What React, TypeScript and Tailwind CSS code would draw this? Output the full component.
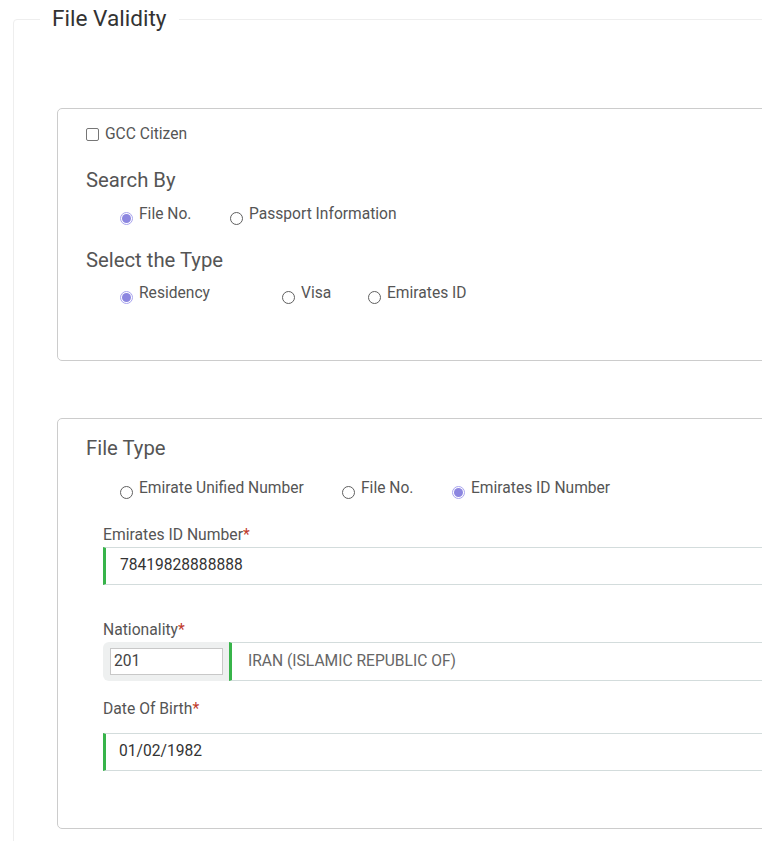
import React from "react";

function Radio({ label, checked, width }: { label: string; checked?: boolean; width: string }) {
  return (
    <div className={`flex items-center ${width}`}>
      <span
        className={`relative top-[4px] mr-[6px] flex h-[13px] w-[13px] shrink-0 items-center justify-center rounded-full border ${
          checked ? "border-[#a9a4ee] bg-white" : "border-[#5f5f5f] bg-white"
        }`}
      >
        {checked && <span className="h-[9px] w-[9px] rounded-full bg-[#8c86e0]" />}
      </span>
      <span className="whitespace-nowrap text-[15.6px] leading-[20px] text-[#555]">{label}</span>
    </div>
  );
}

function Label({ text }: { text: string }) {
  return (
    <div className="text-[15.7px] leading-[20px] text-[#555]">
      {text}
      <span className="text-[#c0392b]">*</span>
    </div>
  );
}

export default function App() {
  return (
    <div
      className="h-[841px] w-[762px] overflow-hidden bg-white"
      style={{ fontFamily: "Roboto, 'Liberation Sans', sans-serif" }}
    >
      <div className="w-[1000px] pl-[13px]">
        <fieldset className="rounded-tl-[4px] border border-[#eeeeee] pb-[40px]">
          <legend className="ml-[26px] px-[12px] text-[22.6px] leading-[38px] text-[#333]">File Validity</legend>

          <div className="pl-[43px]">
            <div className="mt-[70px] rounded-[5px] border border-[#cccccc] pb-[57px] pl-[28px] pt-[15px]">
              <div className="flex items-center leading-[20px]">
                <span className="mr-[6px] h-[13px] w-[13px] rounded-[2px] border border-[#767676] bg-white" />
                <span className="text-[15.6px] text-[#555]">GCC Citizen</span>
              </div>
              <div className="mt-[24px] text-[20.3px] leading-[24px] text-[#555]">Search By</div>
              <div className="mt-[12px] flex pl-[34px]">
                <Radio label="File No." checked width="w-[110px]" />
                <Radio label="Passport Information" width="w-[200px]" />
              </div>
              <div className="mt-[24px] text-[20.3px] leading-[24px] text-[#555]">Select the Type</div>
              <div className="mt-[11px] flex pl-[34px]">
                <Radio label="Residency" checked width="w-[162px]" />
                <Radio label="Visa" width="w-[86px]" />
                <Radio label="Emirates ID" width="w-[120px]" />
              </div>
            </div>

            <div className="mt-[57px] rounded-[5px] border border-[#cccccc] pb-[57px] pl-[28px] pt-[17px]">
              <div className="text-[20.3px] leading-[24px] text-[#555]">File Type</div>
              <div className="mt-[18px] flex pl-[34px]">
                <Radio label="Emirate Unified Number" width="w-[222px]" />
                <Radio label="File No." width="w-[110px]" />
                <Radio label="Emirates ID Number" checked width="w-[200px]" />
              </div>

              <div className="ml-[17px]">
                <div className="mt-[27px]">
                  <Label text="Emirates ID Number" />
                </div>
                <div className="mt-[2px] flex h-[38px] items-center border border-l-[3px] border-[#d3dcdc] border-l-[#37b44a] pl-[14px] text-[15.6px] text-[#333]">
                  78419828888888
                </div>

                <div className="mt-[35px]">
                  <Label text="Nationality" />
                </div>
                <div className="mt-[2px] flex h-[39px]">
                  <div className="flex w-[126px] items-center rounded-l-[6px] bg-[#eef0f0] pl-[7px]">
                    <div className="flex h-[27px] w-[113px] items-center border border-[#c8c8c8] bg-white pl-[3px] text-[15.6px] text-[#444]">
                      201
                    </div>
                  </div>
                  <div className="flex flex-1 items-center border border-l-[3px] border-[#d3dcdc] border-l-[#37b44a] pl-[16px] text-[15.6px] text-[#666]">
                    IRAN (ISLAMIC REPUBLIC OF)
                  </div>
                </div>

                <div className="mt-[18px]">
                  <Label text="Date Of Birth" />
                </div>
                <div className="mt-[14px] flex h-[38px] items-center border border-l-[3px] border-[#d3dcdc] border-l-[#37b44a] pl-[13px] text-[15.6px] text-[#333]">
                  01/02/1982
                </div>
              </div>
            </div>
          </div>
        </fieldset>
      </div>
    </div>
  );
}
